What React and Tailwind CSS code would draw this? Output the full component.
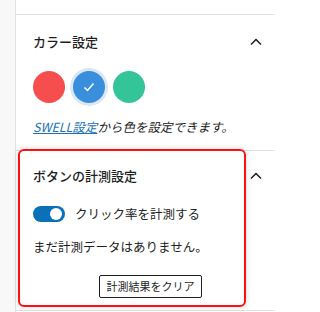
import React, { useState } from 'react';

const font = { fontFamily: '"Noto Sans CJK JP", "Noto Sans", sans-serif' };

const Chevron = () => (
  <svg width="12" height="8" viewBox="0 0 12 8" className="text-[#1e1e1e]">
    <path d="M1 6.5 L6 1.5 L11 6.5" fill="none" stroke="currentColor" strokeWidth="1.5" />
  </svg>
);

const PanelTitle = ({ children }) => (
  <div className="flex items-center justify-between pr-[13px]">
    <span className="text-[13px] leading-[22px] font-medium text-[#1e1e1e]">{children}</span>
    <Chevron />
  </div>
);

const App = () => {
  const [selected, setSelected] = useState(1);
  const [tracking, setTracking] = useState(true);

  const colors = ['bg-[#f64d4f]', 'bg-[#3a8fdc]', 'bg-[#33c497]'];

  return (
    <div className="relative w-[275px] h-[312px] flex bg-white overflow-hidden" style={font}>
      {/* left strip */}
      <div className="w-4 shrink-0 bg-[#f8f8f8] border-r border-[#e2e2e2]" />

      <div className="flex-1 flex flex-col">
        <div className="h-[15px] shrink-0 border-b border-[#e2e2e2]" />

        {/* カラー設定 */}
        <div className="pl-[17px] pt-4 pb-[13px] border-b border-[#e2e2e2]">
          <PanelTitle>カラー設定</PanelTitle>
          <div className="flex gap-2 mt-[18px]">
            {colors.map((c, i) => (
              <button
                key={c}
                onClick={() => setSelected(i)}
                className={`w-8 h-8 rounded-full flex items-center justify-center ${c} ${
                  selected === i ? 'ring-[3px] ring-[#dbe7f4]' : ''
                }`}
              >
                {selected === i && (
                  <svg width="12" height="10" viewBox="0 0 12 10">
                    <path d="M1.5 5.5 L4.5 8.5 L10.5 1.5" fill="none" stroke="white" strokeWidth="1.5" />
                  </svg>
                )}
              </button>
            ))}
          </div>
          <p className="mt-[14px] text-[12.5px] leading-5 italic text-[#1e1e1e]">
            <span className="text-[#2271b1] underline">SWELL設定</span>から色を設定できます。
          </p>
        </div>

        {/* ボタンの計測設定 */}
        <div className="pl-[17px] pt-[14px] h-[160px] shrink-0 border-b border-[#e2e2e2]">
          <PanelTitle>ボタンの計測設定</PanelTitle>
          <label className="mt-[17px] flex items-center gap-[10px] h-5">
            <button
              onClick={() => setTracking(!tracking)}
              className={`w-8 h-4 rounded-full flex items-center px-[3px] ${
                tracking ? 'bg-[#0a70b8] justify-end' : 'bg-[#949494] justify-start'
              }`}
            >
              <span className="w-3 h-3 rounded-full bg-white" />
            </button>
            <span className="text-[12.5px] text-[#1e1e1e]">クリック率を計測する</span>
          </label>
          <p className="mt-[13px] text-[12.5px] leading-5 text-[#1e1e1e]">まだ計測データはありません。</p>
          <div className="mt-[15px] pl-[66px]">
            <button className="h-[23px] w-[103px] border border-[#1e1e1e] rounded-[2px] bg-white text-[11px] text-[#1e1e1e]">
              計測結果をクリア
            </button>
          </div>
        </div>
      </div>

      {/* red annotation frame */}
      <div className="absolute left-[18px] top-[149px] w-[228px] h-[158px] border-2 border-[#ff1010] rounded-[6px] shadow-[0_0_6px_rgba(0,0,0,0.15)] pointer-events-none" />
    </div>
  );
};

export default App;
